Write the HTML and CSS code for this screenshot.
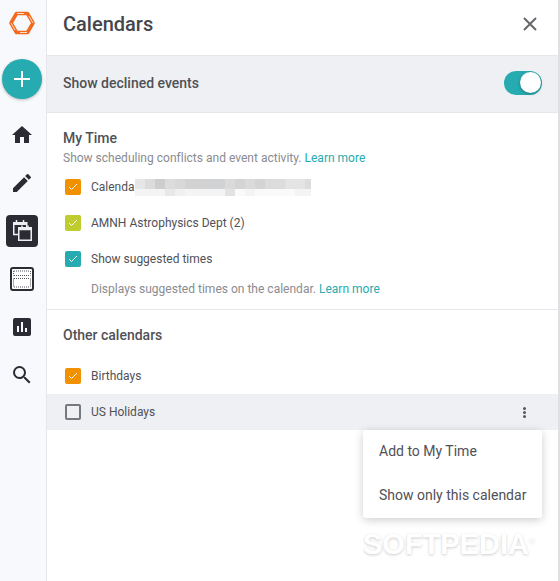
FILE: index.html
```html
<!DOCTYPE html>
<html lang="en">
  <head>
    <meta charset="UTF-8" />
    <title>Calendars</title>
    <link rel="stylesheet" href="styles.css">
  </head>
  <body>
    <div class="app">
      <nav class="sidebar">
        <svg class="logo" width="26" height="24" viewBox="0 0 26 24" fill="none" stroke-linejoin="round">
          <path stroke="#f26a1b" stroke-width="3.500" d="M7.500 2.500h11L24 12l-5.500 9.500h-11L2 12z"/>
          <path stroke="#fff" stroke-width=".9" opacity=".85" d="M8 2.500h7M24 12l-4-7M18 21.500h-7M2 12l4 7"/>
        </svg>
        <button class="add">
          <svg width="20" height="20" viewBox="0 0 20 20"><path fill="#fff" d="M9 2h2v7h7v2h-7v7H9v-7H2V9h7z"/></svg>
        </button>
        <div class="nav-item">
          <svg width="24" height="24" viewBox="0 0 24 24"><path fill="#2b2c33" d="M10 20v-6h4v6h5v-8h3L12 3 2 12h3v8z"/></svg>
        </div>
        <div class="nav-item">
          <svg width="24" height="24" viewBox="0 0 24 24"><path fill="#2b2c33" d="M3 17.250V21h3.750L17.810 9.940l-3.750-3.750zM20.710 7.040a1 1 0 0 0 0-1.410l-2.340-2.340a1 1 0 0 0-1.410 0l-1.830 1.830 3.750 3.750z"/></svg>
        </div>
        <div class="nav-item">
          <div class="nav-active">
            <svg width="32" height="32" viewBox="0 0 32 32" fill="none" stroke="#eceef2" stroke-width="1.500">
              <path d="M12.500 19.500H7.750V7.750h13v4.500"/>
              <path stroke-width="2.500" d="M7.500 8.750h13.500"/>
              <path d="M10.500 5v2M17.500 5v2"/>
              <path d="M12.750 12.750h12.500v12.500h-12.500z"/>
              <path stroke-width="2.500" d="M12.500 14h13"/>
              <path d="M16 10.500v2M22 10.500v2"/>
            </svg>
          </div>
        </div>
        <div class="nav-item">
          <svg width="26" height="26" viewBox="0 0 26 26" fill="none">
            <rect x="2" y="2" width="22" height="22" rx="2" fill="#fff" stroke="#2b2c33" stroke-width="2"/>
            <path stroke="#55565c" stroke-dasharray="1 1" d="M5 5h16M5 9.500h16M5 12.500h16M5 21h16M4.500 5v4.500M21.500 5v4.500M4.500 12.500V21M21.500 12.500V21"/>
          </svg>
        </div>
        <div class="nav-item">
          <svg width="18" height="18" viewBox="0 0 18 18"><path fill="#2b2c33" fill-rule="evenodd" d="M2 0h14a2 2 0 0 1 2 2v14a2 2 0 0 1-2 2H2a2 2 0 0 1-2-2V2a2 2 0 0 1 2-2zm2 8v6h2V8zm4-4v10h2V4zm4 6v4h2v-4z"/></svg>
        </div>
        <div class="nav-item">
          <svg width="24" height="24" viewBox="0 0 24 24"><path fill="#2b2c33" d="M15.500 14h-.790l-.280-.270A6.470 6.470 0 0 0 16 9.500 6.500 6.500 0 1 0 9.500 16c1.610 0 3.090-.590 4.230-1.570l.270.280v.790l5 4.990L20.490 19zm-6 0C7.010 14 5 11.990 5 9.500S7.010 5 9.500 5 14 7.010 14 9.500 11.990 14 9.500 14z"/></svg>
        </div>
      </nav>

      <main class="panel">
        <header class="panel-head">
          <h1>Calendars</h1>
          <svg width="16" height="16" viewBox="0 0 16 16"><path stroke="#66676c" stroke-width="2" d="M2 2l12 12M14 2L2 14"/></svg>
        </header>

        <div class="declined">
          <span>Show declined events</span>
          <div class="toggle"><div class="knob"></div></div>
        </div>

        <section class="mytime">
          <h2>My Time</h2>
          <p class="hint">Show scheduling conflicts and event activity. <a>Learn more</a></p>
          <div class="row">
            <span class="check orange"><svg width="10" height="8" viewBox="0 0 10 8"><path fill="none" stroke="#fff" d="M1 4l2.500 2.500L9 1"/></svg></span>
            <span>Calenda</span><span class="blurred"></span>
          </div>
          <div class="row">
            <span class="check lime"><svg width="10" height="8" viewBox="0 0 10 8"><path fill="none" stroke="#fff" d="M1 4l2.500 2.500L9 1"/></svg></span>
            <span>AMNH Astrophysics Dept (2)</span>
          </div>
          <div class="row">
            <span class="check teal"><svg width="10" height="8" viewBox="0 0 10 8"><path fill="none" stroke="#fff" d="M1 4l2.500 2.500L9 1"/></svg></span>
            <span>Show suggested times</span>
          </div>
          <p class="hint sub">Displays suggested times on the calendar. <a>Learn more</a></p>
        </section>

        <section class="other">
          <h2>Other calendars</h2>
          <div class="row">
            <span class="check orange"><svg width="10" height="8" viewBox="0 0 10 8"><path fill="none" stroke="#fff" d="M1 4l2.500 2.500L9 1"/></svg></span>
            <span>Birthdays</span>
          </div>
          <div class="row hovered">
            <span class="check empty"></span>
            <span>US Holidays</span>
            <span class="dots"><i></i><i></i><i></i></span>
          </div>
        </section>

        <div class="menu">
          <div class="menu-item">Add to My Time</div>
          <div class="menu-item">Show only this calendar</div>
        </div>
        <div class="watermark">SOFTPEDIA<sup>®</sup></div>
      </main>
    </div>
  </body>
</html>
```
FILE: styles.css
```css
* {
  box-sizing: border-box;
}
html,
body {
  margin: 0;
  height: 100%;
}
body {
  font-family: Roboto, "Liberation Sans", sans-serif;
  color: #505157;
  background: #fff;
  overflow: hidden;
}
.app {
  display: flex;
  height: 581px;
  border-right: 2px solid #dfe0e4;
}

/* left rail */
.sidebar {
  width: 47px;
  flex: none;
  background: #f8f9fc;
  border-right: 1px solid #e6e7ea;
  display: flex;
  flex-direction: column;
  align-items: center;
  padding-top: 11px;
}
.logo {
  margin-left: -2px;
}
.add {
  width: 40px;
  height: 40px;
  margin: 24px 0 12px -2px;
  padding: 0;
  border: none;
  border-radius: 50%;
  background: #26abb0;
  box-shadow: 0 1px 3px rgba(0, 0, 0, 0.25);
  display: flex;
  align-items: center;
  justify-content: center;
}
.nav-item {
  height: 48px;
  display: flex;
  align-items: center;
  justify-content: center;
  margin-left: -3px;
}
.nav-active {
  width: 32px;
  height: 32px;
  border-radius: 4px;
  background: #2b2c33;
}

/* main panel */
.panel {
  flex: 1;
  position: relative;
}
.panel-head {
  height: 56px;
  padding: 0 20px 8px 16px;
  border-bottom: 1px solid #e6e7ea;
  display: flex;
  align-items: center;
  justify-content: space-between;
}
h1 {
  margin: 0;
  font-size: 20px;
  font-weight: 500;
  color: #45464c;
}
.declined {
  height: 57px;
  padding: 0 16px 2px;
  background: #eff0f4;
  border-bottom: 1px solid #e6e7ea;
  display: flex;
  align-items: center;
  justify-content: space-between;
  font-size: 14px;
  font-weight: 500;
}
.toggle {
  width: 38px;
  height: 24px;
  border-radius: 12px;
  background: #26abb0;
  position: relative;
}
.knob {
  position: absolute;
  top: 1px;
  right: 1px;
  width: 21px;
  height: 21px;
  border-radius: 50%;
  background: #fff;
  box-shadow: 0 1px 3px rgba(0, 0, 0, 0.3);
}
.mytime {
  padding-top: 17px;
  height: 197px;
  border-bottom: 1px solid #e6e7ea;
}
.other {
  padding-top: 17px;
}
h2 {
  margin: 0 16px;
  font-size: 14px;
  line-height: 16px;
  font-weight: 500;
}
.hint {
  margin: 4px 16px 3px;
  font-size: 12px;
  line-height: 16px;
  letter-spacing: 0.01px;
  color: #8a8b90;
}
.hint a {
  color: #26abb0;
}
.hint.sub {
  margin: 4px 0 0 44px;
}
.row {
  height: 36px;
  padding: 0 16px 0 18px;
  display: flex;
  align-items: center;
  font-size: 12px;
}
.other h2 {
  margin-bottom: 15px;
}
.hovered {
  background: #eff0f4;
}
.check {
  width: 16px;
  height: 16px;
  margin-right: 10px;
  border-radius: 2px;
  display: flex;
  align-items: center;
  justify-content: center;
  flex: none;
}
.orange {
  background: #f29100;
}
.lime {
  background: #bfcc2e;
}
.teal {
  background: #26abb0;
}
.empty {
  border: 2px solid #77787d;
}
.blurred {
  width: 176px;
  height: 17px;
  background:
    linear-gradient(90deg, #e6e6e6 0 10px, #dcdcdc 0 20px, #cdcdcd 0 30px, #dcdcdc 0 40px, #d8d8d8 0 50px, #d2d2d2 0 70px, #d0d2d4 0 90px, #dadada 0 100px, #d4d4d4 0 110px, #dadada 0 120px, #d2d4d6 0 130px, #dcdcdc 0 150px, #e4e4e4 0 170px, #dcdcdc 0 176px) top / 100% 10px no-repeat,
    linear-gradient(90deg, #f4f4f4 0 30px, #e8e8e8 0 40px, #f0f0f0 0 50px, #f4f4f4 0 90px, #e2e2e2 0 100px, #fafafa 0 110px, #f4f4f4 0 120px, #fafafa 0 160px, #f4f4f4 0 176px) bottom / 100% 7px no-repeat;
}
.dots {
  margin-left: auto;
  margin-right: 16px;
  display: flex;
  flex-direction: column;
  gap: 1px;
}
.dots i {
  width: 3px;
  height: 3px;
  border-radius: 50%;
  background: #55565c;
}

/* popup menu */
.menu {
  position: absolute;
  left: 316px;
  top: 430px;
  width: 179px;
  height: 88px;
  padding-top: 1px;
  background: #fff;
  border-radius: 3px;
  box-shadow: 0 2px 10px rgba(0, 0, 0, 0.2);
  font-size: 14px;
}
.menu-item {
  height: 40px;
  padding-left: 16px;
  display: flex;
  align-items: center;
  white-space: nowrap;
}
.menu-item + .menu-item {
  height: 47px;
}
.watermark {
  position: absolute;
  left: 316px;
  top: 524px;
  font-family: "Liberation Sans", sans-serif;
  font-weight: 700;
  font-size: 29px;
  line-height: 34px;
  color: #fff;
  text-shadow: 0 1px 3px rgba(0, 0, 0, 0.2);
}
.watermark sup {
  font-size: 8px;
  font-weight: 400;
}
```
